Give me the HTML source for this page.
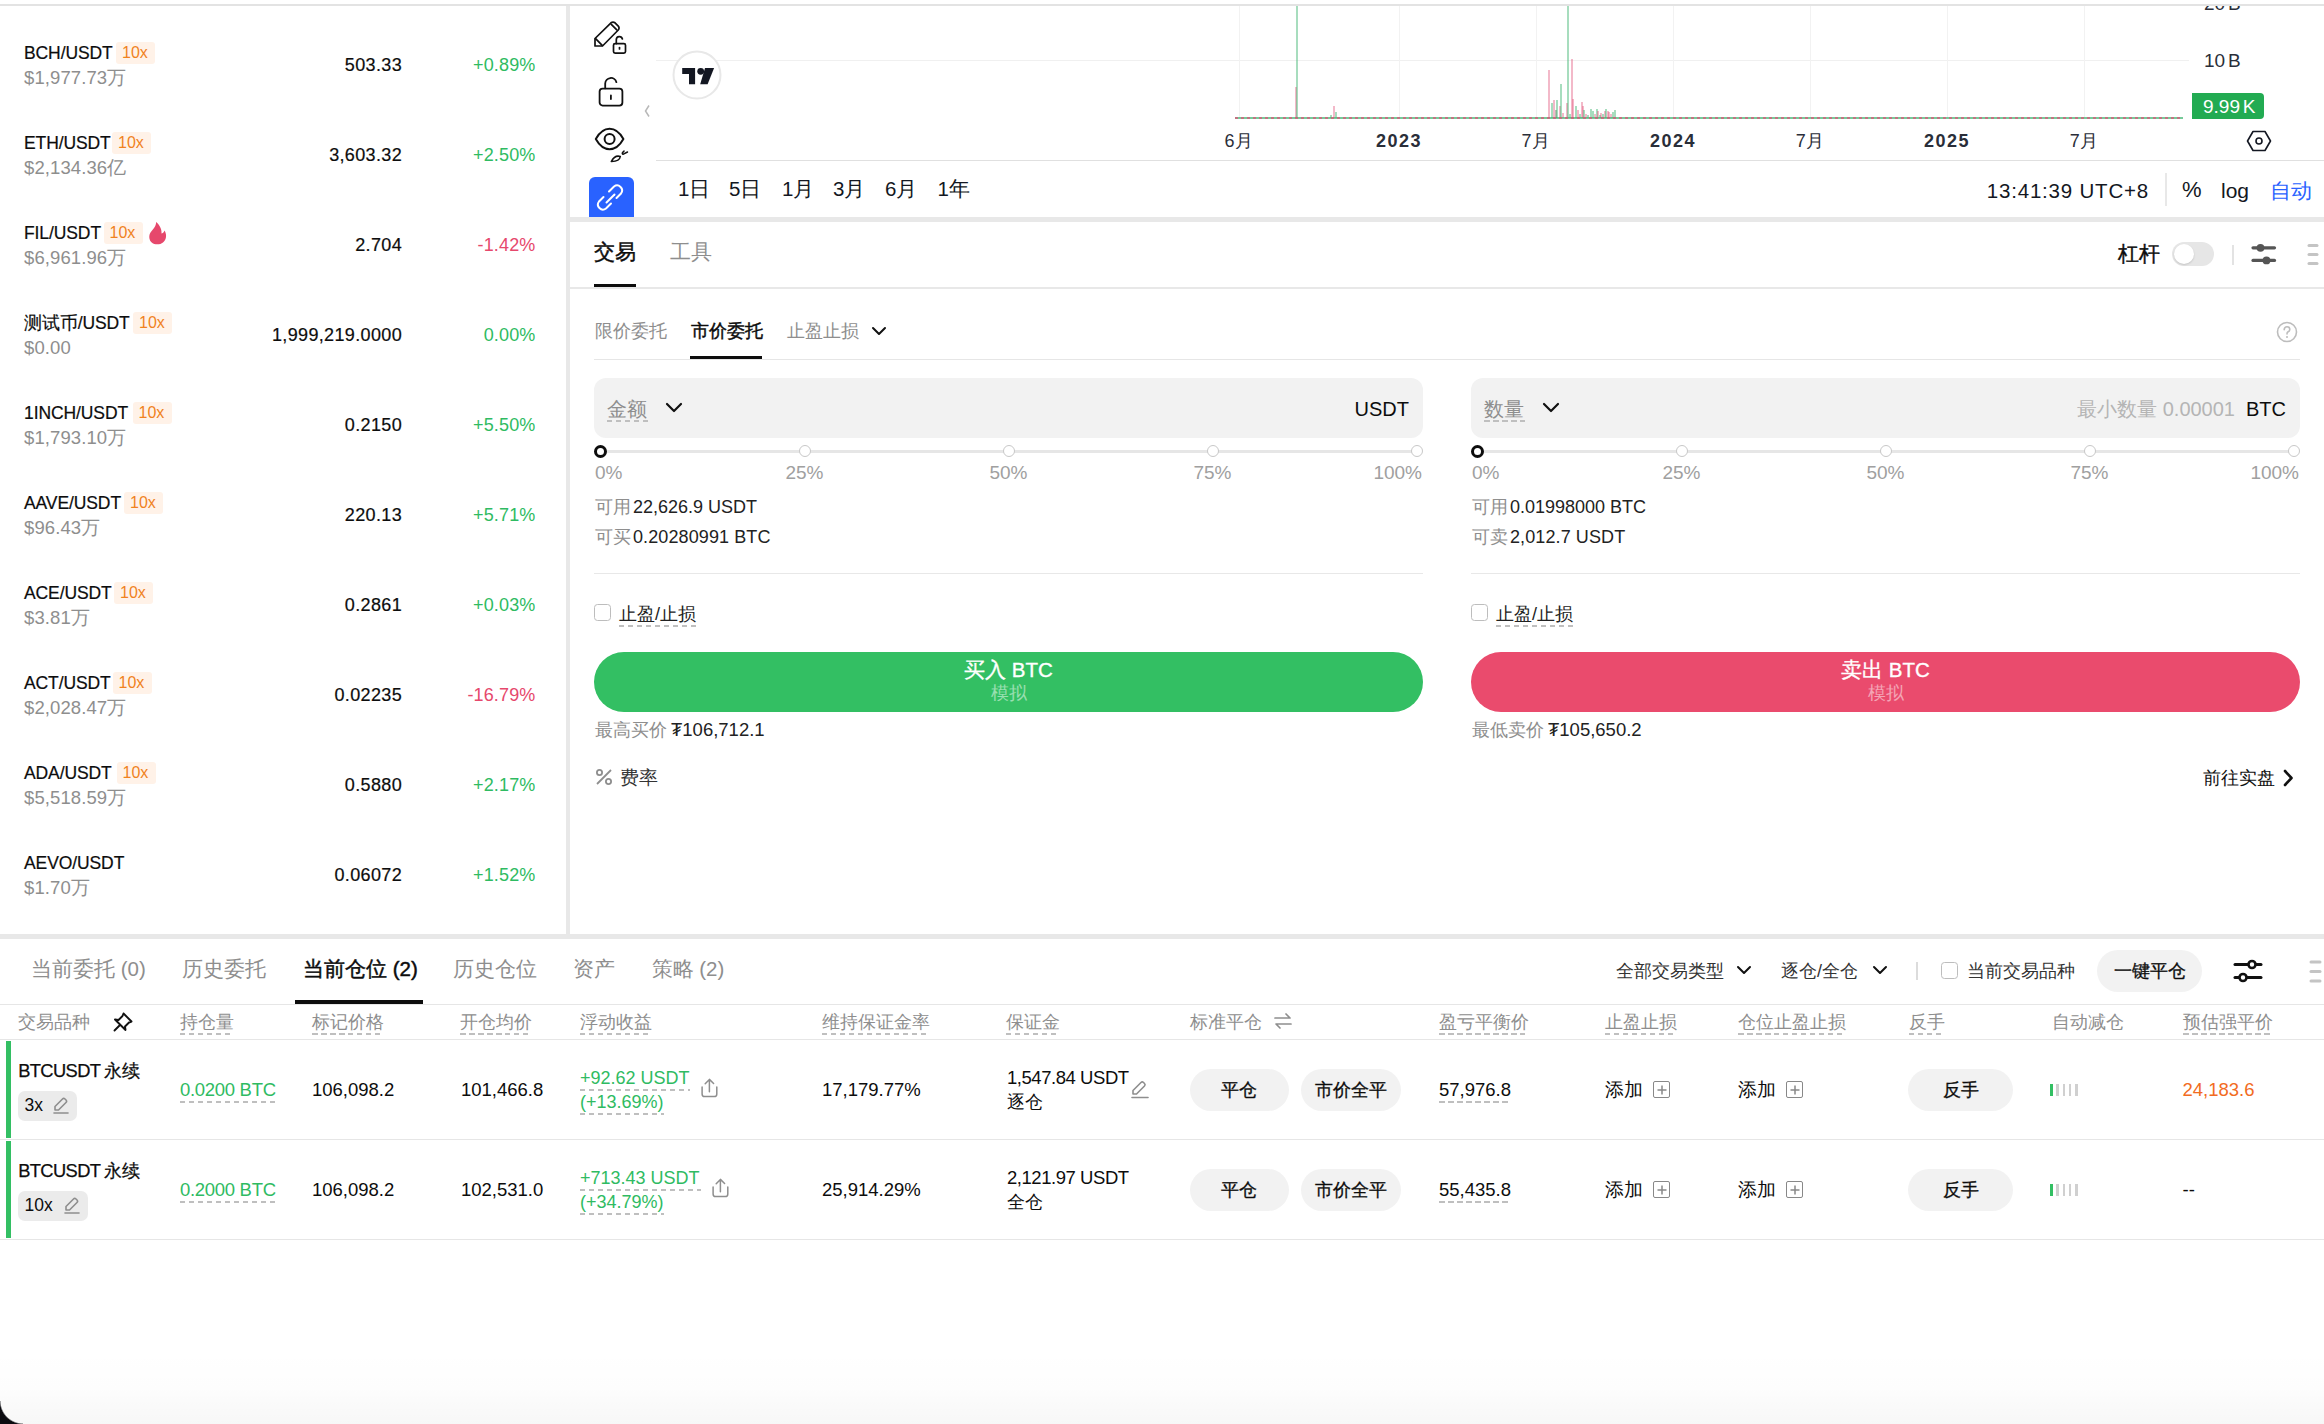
<!DOCTYPE html><html><head><meta charset="utf-8"><style>
html,body{margin:0;padding:0;}
body{width:2324px;height:1424px;position:relative;overflow:hidden;background:#fff;font-family:"Liberation Sans",sans-serif;}
.t{position:absolute;white-space:nowrap;}
.r{position:absolute;}
</style></head><body>
<div class="r" style="left:0px;top:4px;width:2324px;height:2px;background:#e3e3e3;border-radius:0px;"></div>
<div class="r" style="left:566px;top:6px;width:4px;height:928px;background:#e8e8e8;border-radius:0px;"></div>
<div class="r" style="left:570px;top:217px;width:1754px;height:5px;background:#e8e8e8;border-radius:0px;"></div>
<div class="r" style="left:0px;top:934px;width:2324px;height:5px;background:#e8e8e8;border-radius:0px;"></div>
<div class="t" style="top:45.2px;font-size:17.5px;line-height:17.5px;color:#0d0d0d;letter-spacing:-0.1px;left:24px;-webkit-text-stroke:0.2px #0d0d0d;">BCH/USDT</div>
<div class="r" style="left:116px;top:42px;width:39px;height:22px;background:#fff2e8;border-radius:3px;"></div>
<div class="t" style="top:44.5px;font-size:16px;line-height:16px;color:#f0821e;left:122px;">10x</div>
<div class="t" style="top:69.3px;font-size:18.5px;line-height:18.5px;color:#8e8e8e;letter-spacing:0.1px;left:24px;">$1,977.73万</div>
<div class="t" style="top:55.8px;font-size:18px;line-height:18px;color:#0d0d0d;letter-spacing:0.35px;right:1922px;-webkit-text-stroke:0.2px #0d0d0d;">503.33</div>
<div class="t" style="top:55.8px;font-size:18px;line-height:18px;color:#2fbb62;letter-spacing:0.15px;right:1788.5px;">+0.89%</div>
<div class="t" style="top:135.2px;font-size:17.5px;line-height:17.5px;color:#0d0d0d;letter-spacing:-0.1px;left:24px;-webkit-text-stroke:0.2px #0d0d0d;">ETH/USDT</div>
<div class="r" style="left:112px;top:132px;width:39px;height:22px;background:#fff2e8;border-radius:3px;"></div>
<div class="t" style="top:134.5px;font-size:16px;line-height:16px;color:#f0821e;left:118px;">10x</div>
<div class="t" style="top:159.3px;font-size:18.5px;line-height:18.5px;color:#8e8e8e;letter-spacing:0.1px;left:24px;">$2,134.36亿</div>
<div class="t" style="top:145.8px;font-size:18px;line-height:18px;color:#0d0d0d;letter-spacing:0.35px;right:1922px;-webkit-text-stroke:0.2px #0d0d0d;">3,603.32</div>
<div class="t" style="top:145.8px;font-size:18px;line-height:18px;color:#2fbb62;letter-spacing:0.15px;right:1788.5px;">+2.50%</div>
<div class="t" style="top:225.2px;font-size:17.5px;line-height:17.5px;color:#0d0d0d;letter-spacing:-0.1px;left:24px;-webkit-text-stroke:0.2px #0d0d0d;">FIL/USDT</div>
<div class="r" style="left:103.5px;top:222px;width:39px;height:22px;background:#fff2e8;border-radius:3px;"></div>
<div class="t" style="top:224.5px;font-size:16px;line-height:16px;color:#f0821e;left:109.5px;">10x</div>
<svg class="r" style="left:147.5px;top:221px;" width="20" height="24" viewBox="0 0 20 24" fill="none"><path d="M8,1 C8.5,5 5,8 2.5,11.5 C0.5,14.5 1,19.5 4,21.8 C6.5,23.8 12,24 15,21.5 C18.5,18.5 19,13.5 16.5,9.5 C16,11.5 14.5,12.5 13.5,12.5 C14,8.5 11.5,3.5 8,1 Z" fill="#e6486c"/></svg>
<div class="t" style="top:249.3px;font-size:18.5px;line-height:18.5px;color:#8e8e8e;letter-spacing:0.1px;left:24px;">$6,961.96万</div>
<div class="t" style="top:235.8px;font-size:18px;line-height:18px;color:#0d0d0d;letter-spacing:0.35px;right:1922px;-webkit-text-stroke:0.2px #0d0d0d;">2.704</div>
<div class="t" style="top:235.8px;font-size:18px;line-height:18px;color:#e6486c;letter-spacing:0.15px;right:1788.5px;">-1.42%</div>
<div class="t" style="top:315.2px;font-size:17.5px;line-height:17.5px;color:#0d0d0d;letter-spacing:-0.1px;left:24px;-webkit-text-stroke:0.2px #0d0d0d;">测试币/USDT</div>
<div class="r" style="left:133px;top:312px;width:39px;height:22px;background:#fff2e8;border-radius:3px;"></div>
<div class="t" style="top:314.5px;font-size:16px;line-height:16px;color:#f0821e;left:139px;">10x</div>
<div class="t" style="top:339.3px;font-size:18.5px;line-height:18.5px;color:#8e8e8e;letter-spacing:0.1px;left:24px;">$0.00</div>
<div class="t" style="top:325.8px;font-size:18px;line-height:18px;color:#0d0d0d;letter-spacing:0.35px;right:1922px;-webkit-text-stroke:0.2px #0d0d0d;">1,999,219.0000</div>
<div class="t" style="top:325.8px;font-size:18px;line-height:18px;color:#2fbb62;letter-spacing:0.15px;right:1788.5px;">0.00%</div>
<div class="t" style="top:405.2px;font-size:17.5px;line-height:17.5px;color:#0d0d0d;letter-spacing:-0.1px;left:24px;-webkit-text-stroke:0.2px #0d0d0d;">1INCH/USDT</div>
<div class="r" style="left:132.5px;top:402px;width:39px;height:22px;background:#fff2e8;border-radius:3px;"></div>
<div class="t" style="top:404.5px;font-size:16px;line-height:16px;color:#f0821e;left:138.5px;">10x</div>
<div class="t" style="top:429.3px;font-size:18.5px;line-height:18.5px;color:#8e8e8e;letter-spacing:0.1px;left:24px;">$1,793.10万</div>
<div class="t" style="top:415.8px;font-size:18px;line-height:18px;color:#0d0d0d;letter-spacing:0.35px;right:1922px;-webkit-text-stroke:0.2px #0d0d0d;">0.2150</div>
<div class="t" style="top:415.8px;font-size:18px;line-height:18px;color:#2fbb62;letter-spacing:0.15px;right:1788.5px;">+5.50%</div>
<div class="t" style="top:495.2px;font-size:17.5px;line-height:17.5px;color:#0d0d0d;letter-spacing:-0.1px;left:24px;-webkit-text-stroke:0.2px #0d0d0d;">AAVE/USDT</div>
<div class="r" style="left:124px;top:492px;width:39px;height:22px;background:#fff2e8;border-radius:3px;"></div>
<div class="t" style="top:494.5px;font-size:16px;line-height:16px;color:#f0821e;left:130px;">10x</div>
<div class="t" style="top:519.3px;font-size:18.5px;line-height:18.5px;color:#8e8e8e;letter-spacing:0.1px;left:24px;">$96.43万</div>
<div class="t" style="top:505.8px;font-size:18px;line-height:18px;color:#0d0d0d;letter-spacing:0.35px;right:1922px;-webkit-text-stroke:0.2px #0d0d0d;">220.13</div>
<div class="t" style="top:505.8px;font-size:18px;line-height:18px;color:#2fbb62;letter-spacing:0.15px;right:1788.5px;">+5.71%</div>
<div class="t" style="top:585.2px;font-size:17.5px;line-height:17.5px;color:#0d0d0d;letter-spacing:-0.1px;left:24px;-webkit-text-stroke:0.2px #0d0d0d;">ACE/USDT</div>
<div class="r" style="left:114px;top:582px;width:39px;height:22px;background:#fff2e8;border-radius:3px;"></div>
<div class="t" style="top:584.5px;font-size:16px;line-height:16px;color:#f0821e;left:120px;">10x</div>
<div class="t" style="top:609.3px;font-size:18.5px;line-height:18.5px;color:#8e8e8e;letter-spacing:0.1px;left:24px;">$3.81万</div>
<div class="t" style="top:595.8px;font-size:18px;line-height:18px;color:#0d0d0d;letter-spacing:0.35px;right:1922px;-webkit-text-stroke:0.2px #0d0d0d;">0.2861</div>
<div class="t" style="top:595.8px;font-size:18px;line-height:18px;color:#2fbb62;letter-spacing:0.15px;right:1788.5px;">+0.03%</div>
<div class="t" style="top:675.2px;font-size:17.5px;line-height:17.5px;color:#0d0d0d;letter-spacing:-0.1px;left:24px;-webkit-text-stroke:0.2px #0d0d0d;">ACT/USDT</div>
<div class="r" style="left:112.5px;top:672px;width:39px;height:22px;background:#fff2e8;border-radius:3px;"></div>
<div class="t" style="top:674.5px;font-size:16px;line-height:16px;color:#f0821e;left:118.5px;">10x</div>
<div class="t" style="top:699.3px;font-size:18.5px;line-height:18.5px;color:#8e8e8e;letter-spacing:0.1px;left:24px;">$2,028.47万</div>
<div class="t" style="top:685.8px;font-size:18px;line-height:18px;color:#0d0d0d;letter-spacing:0.35px;right:1922px;-webkit-text-stroke:0.2px #0d0d0d;">0.02235</div>
<div class="t" style="top:685.8px;font-size:18px;line-height:18px;color:#e6486c;letter-spacing:0.15px;right:1788.5px;">-16.79%</div>
<div class="t" style="top:765.2px;font-size:17.5px;line-height:17.5px;color:#0d0d0d;letter-spacing:-0.1px;left:24px;-webkit-text-stroke:0.2px #0d0d0d;">ADA/USDT</div>
<div class="r" style="left:116.5px;top:762px;width:39px;height:22px;background:#fff2e8;border-radius:3px;"></div>
<div class="t" style="top:764.5px;font-size:16px;line-height:16px;color:#f0821e;left:122.5px;">10x</div>
<div class="t" style="top:789.3px;font-size:18.5px;line-height:18.5px;color:#8e8e8e;letter-spacing:0.1px;left:24px;">$5,518.59万</div>
<div class="t" style="top:775.8px;font-size:18px;line-height:18px;color:#0d0d0d;letter-spacing:0.35px;right:1922px;-webkit-text-stroke:0.2px #0d0d0d;">0.5880</div>
<div class="t" style="top:775.8px;font-size:18px;line-height:18px;color:#2fbb62;letter-spacing:0.15px;right:1788.5px;">+2.17%</div>
<div class="t" style="top:855.2px;font-size:17.5px;line-height:17.5px;color:#0d0d0d;letter-spacing:-0.1px;left:24px;-webkit-text-stroke:0.2px #0d0d0d;">AEVO/USDT</div>
<div class="t" style="top:879.3px;font-size:18.5px;line-height:18.5px;color:#8e8e8e;letter-spacing:0.1px;left:24px;">$1.70万</div>
<div class="t" style="top:865.8px;font-size:18px;line-height:18px;color:#0d0d0d;letter-spacing:0.35px;right:1922px;-webkit-text-stroke:0.2px #0d0d0d;">0.06072</div>
<div class="t" style="top:865.8px;font-size:18px;line-height:18px;color:#2fbb62;letter-spacing:0.15px;right:1788.5px;">+1.52%</div>
<div class="r" style="left:656px;top:60px;width:1533px;height:1px;background:#f0f0f0;border-radius:0px;"></div>
<div class="r" style="left:1239px;top:6px;width:1px;height:112px;background:#f2f2f2;border-radius:0px;"></div>
<div class="r" style="left:1399px;top:6px;width:1px;height:112px;background:#f2f2f2;border-radius:0px;"></div>
<div class="r" style="left:1536px;top:6px;width:1px;height:112px;background:#f2f2f2;border-radius:0px;"></div>
<div class="r" style="left:1673px;top:6px;width:1px;height:112px;background:#f2f2f2;border-radius:0px;"></div>
<div class="r" style="left:1810px;top:6px;width:1px;height:112px;background:#f2f2f2;border-radius:0px;"></div>
<div class="r" style="left:1947px;top:6px;width:1px;height:112px;background:#f2f2f2;border-radius:0px;"></div>
<div class="r" style="left:2084px;top:6px;width:1px;height:112px;background:#f2f2f2;border-radius:0px;"></div>
<div class="r" style="left:656px;top:160px;width:1668px;height:1px;background:#e0e0e0;border-radius:0px;"></div>
<svg class="r" style="left:594px;top:21px;" width="34" height="34" viewBox="0 0 34 34" fill="none"><g stroke="#111" stroke-width="1.7" stroke-linejoin="round" stroke-linecap="round"><path d="M1,25 L1,17.5 L17,1.8 Q19,0.3 21,1.8 L24.3,5.1 Q25.8,7 24.3,9 L8.5,25 Z"/><path d="M17.3,3.3 L22.8,8.8"/><path d="M1.6,17.6 L8.2,24.4"/><rect x="19.5" y="22.6" width="12" height="9.6" rx="1.6" fill="#fff"/><path d="M22.3,22.6 V18.6 A3.1,3.1 0 0 1 28.4,18"/><path d="M25.5,26.5 V28"/></g></svg>
<svg class="r" style="left:597px;top:75px;" width="28" height="34" viewBox="0 0 28 34" fill="none"><g stroke="#111" stroke-width="1.8" stroke-linecap="round"><rect x="2.6" y="13.6" width="22.8" height="17" rx="3"/><path d="M8.2,13.3 V8.5 A5.7,5.7 0 0 1 19.4,7.2"/><path d="M13.9,20.5 V24"/></g></svg>
<svg class="r" style="left:594px;top:126px;" width="36" height="38" viewBox="0 0 36 38" fill="none"><g stroke="#111" stroke-width="2" stroke-linejoin="round" stroke-linecap="round"><path d="M1.8,13 C6,5.5 11,2.8 15.6,2.8 C20.2,2.8 25.2,5.5 29.4,13 C25.2,20.5 20.2,23.2 15.6,23.2 C11,23.2 6,20.5 1.8,13 Z"/><circle cx="15.6" cy="13" r="5"/><path d="M17.3,35.5 Q20.8,28.8 26.3,30.5 Q25.5,35.6 17.3,35.5 Z" stroke-width="1.6"/><path d="M30,25.1 Q27.2,27.5 28.9,28.3 L33.5,26" stroke-width="1.5"/></g></svg>
<div class="r" style="left:589px;top:177px;width:45px;height:40px;background:#2962ff;border-radius:6px 6px 0 0;"></div>
<svg class="r" style="left:589px;top:177px;" width="45" height="40" viewBox="0 0 45 40" fill="none"><g stroke="#fff" stroke-width="2" stroke-linecap="round" fill="none"><path d="M20,14.5 L25,9.5 A5,5 0 0 1 32,16.5 L27.5,21"/><path d="M14.5,20 L10,24.5 A5,5 0 0 0 17,31.5 L22,26.5"/><path d="M17.5,25.5 L25.5,17.5"/></g></svg>
<svg class="r" style="left:642px;top:104px;" width="10" height="14" viewBox="0 0 10 14" fill="none"><path d="M7,1.5 L3.5,7 L7,12.5" stroke="#b8b8b8" stroke-width="1.5" fill="none"/></svg>
<svg class="r" style="left:672px;top:50px;" width="50" height="50" viewBox="0 0 50 50" fill="none"><circle cx="25" cy="25" r="23.5" fill="#fff" stroke="#e8e8e8" stroke-width="2"/><path d="M10.2,18 H23.1 V34.3 H17 V24 H10.2 Z" fill="#131722"/><circle cx="28.7" cy="21.3" r="3.4" fill="#131722"/><path d="M33,18 H42.1 L35.6,34.3 H28.2 Z" fill="#131722"/></svg>
<svg class="r" style="left:1235px;top:0px;" width="950" height="120" viewBox="0 0 950 120" fill="none"><rect x="60" y="87" width="2" height="31" fill="rgba(225,80,120,0.4)"/><rect x="61" y="6" width="2" height="112" fill="rgba(60,180,110,0.45)"/><rect x="95" y="115" width="2" height="3" fill="rgba(60,180,110,0.45)"/><rect x="98" y="106" width="2" height="12" fill="rgba(225,80,120,0.4)"/><rect x="100" y="112" width="2" height="6" fill="rgba(60,180,110,0.45)"/><rect x="313" y="70" width="2" height="48" fill="rgba(225,80,120,0.4)"/><rect x="316" y="103" width="2" height="15" fill="rgba(60,180,110,0.45)"/><rect x="318" y="100" width="2" height="18" fill="rgba(225,80,120,0.4)"/><rect x="320" y="110" width="2" height="8" fill="rgba(120,120,100,0.5)"/><rect x="321" y="100" width="2" height="18" fill="rgba(60,180,110,0.45)"/><rect x="324" y="106" width="2" height="12" fill="rgba(225,80,120,0.4)"/><rect x="325" y="84" width="2" height="34" fill="rgba(60,180,110,0.45)"/><rect x="327" y="113" width="2" height="5" fill="rgba(225,80,120,0.4)"/><rect x="331" y="103" width="2" height="15" fill="rgba(225,80,120,0.4)"/><rect x="332" y="6" width="2" height="112" fill="rgba(60,180,110,0.45)"/><rect x="334" y="114" width="2" height="4" fill="rgba(60,180,110,0.45)"/><rect x="336" y="59" width="2" height="59" fill="rgba(225,80,120,0.4)"/><rect x="337" y="99" width="2" height="19" fill="rgba(225,80,120,0.4)"/><rect x="340" y="106" width="2" height="12" fill="rgba(60,180,110,0.45)"/><rect x="342" y="110" width="2" height="8" fill="rgba(225,80,120,0.4)"/><rect x="344" y="114" width="2" height="4" fill="rgba(60,180,110,0.45)"/><rect x="346" y="102" width="2" height="16" fill="rgba(225,80,120,0.4)"/><rect x="347" y="106" width="2" height="12" fill="rgba(225,80,120,0.4)"/><rect x="348" y="110" width="2" height="8" fill="rgba(60,180,110,0.45)"/><rect x="350" y="114" width="2" height="4" fill="rgba(225,80,120,0.4)"/><rect x="352" y="115" width="2" height="3" fill="rgba(60,180,110,0.45)"/><rect x="355" y="109" width="2" height="9" fill="rgba(60,180,110,0.45)"/><rect x="357" y="111" width="2" height="7" fill="rgba(60,180,110,0.45)"/><rect x="359" y="114" width="2" height="4" fill="rgba(225,80,120,0.4)"/><rect x="361" y="109" width="2" height="9" fill="rgba(60,180,110,0.45)"/><rect x="362" y="111" width="2" height="7" fill="rgba(225,80,120,0.4)"/><rect x="364" y="115" width="2" height="3" fill="rgba(60,180,110,0.45)"/><rect x="365" y="113" width="2" height="5" fill="rgba(225,80,120,0.4)"/><rect x="367" y="114" width="2" height="4" fill="rgba(60,180,110,0.45)"/><rect x="369" y="111" width="2" height="7" fill="rgba(225,80,120,0.4)"/><rect x="370" y="109" width="2" height="9" fill="rgba(60,180,110,0.45)"/><rect x="372" y="111" width="2" height="7" fill="rgba(225,80,120,0.4)"/><rect x="373" y="112" width="2" height="6" fill="rgba(225,80,120,0.4)"/><rect x="375" y="114" width="2" height="4" fill="rgba(225,80,120,0.4)"/><rect x="377" y="112" width="2" height="6" fill="rgba(60,180,110,0.45)"/><rect x="379" y="110" width="2" height="8" fill="rgba(60,180,110,0.45)"/><line x1="0" y1="118" x2="948" y2="118" stroke="rgba(60,180,110,0.7)" stroke-width="2"/><line x1="0" y1="118" x2="948" y2="118" stroke="rgba(225,80,120,0.7)" stroke-width="2" stroke-dasharray="3 3"/></svg>
<div class="t" style="top:132.3px;font-size:18px;line-height:18px;color:#2a2e39;left:1224.5px;">6月</div>
<div class="t" style="top:132.3px;font-size:18px;line-height:18px;color:#2a2e39;font-weight:700;letter-spacing:1.5px;left:1376px;">2023</div>
<div class="t" style="top:132.3px;font-size:18px;line-height:18px;color:#2a2e39;left:1521.5px;">7月</div>
<div class="t" style="top:132.3px;font-size:18px;line-height:18px;color:#2a2e39;font-weight:700;letter-spacing:1.5px;left:1650px;">2024</div>
<div class="t" style="top:132.3px;font-size:18px;line-height:18px;color:#2a2e39;left:1795.7px;">7月</div>
<div class="t" style="top:132.3px;font-size:18px;line-height:18px;color:#2a2e39;font-weight:700;letter-spacing:1.5px;left:1924px;">2025</div>
<div class="t" style="top:132.3px;font-size:18px;line-height:18px;color:#2a2e39;left:2069.8px;">7月</div>
<div class="r" style="left:2190px;top:6px;width:80px;height:20px;overflow:hidden"><div class="t" style="left:14px;top:-12.1px;font-size:19px;line-height:19px;color:#2a2e39;word-spacing:-2.5px">20 B</div></div>
<div class="t" style="top:50.9px;font-size:19px;line-height:19px;color:#2a2e39;left:2204px;word-spacing:-2.5px;">10 B</div>
<div class="r" style="left:2191.5px;top:93px;width:72px;height:26px;background:#22ab52;border-radius:0px;border-radius:0 4px 4px 0;"></div>
<div class="t" style="top:96.9px;font-size:19px;line-height:19px;color:#fff;left:2203px;word-spacing:-2.5px;">9.99 K</div>
<svg class="r" style="left:2246px;top:130px;" width="26" height="22" viewBox="0 0 26 22" fill="none"><path d="M7,1.5 H19 L24.5,11 L19,20.5 H7 L1.5,11 Z" stroke="#131722" stroke-width="1.6" stroke-linejoin="round"/><circle cx="13" cy="11" r="3" stroke="#131722" stroke-width="1.6"/></svg>
<div class="t" style="top:179.4px;font-size:20.5px;line-height:20.5px;color:#131722;left:678px;">1日</div>
<div class="t" style="top:179.4px;font-size:20.5px;line-height:20.5px;color:#131722;left:729px;">5日</div>
<div class="t" style="top:179.4px;font-size:20.5px;line-height:20.5px;color:#131722;left:782px;">1月</div>
<div class="t" style="top:179.4px;font-size:20.5px;line-height:20.5px;color:#131722;left:833px;">3月</div>
<div class="t" style="top:179.4px;font-size:20.5px;line-height:20.5px;color:#131722;left:885px;">6月</div>
<div class="t" style="top:179.4px;font-size:20.5px;line-height:20.5px;color:#131722;left:937.5px;">1年</div>
<div class="t" style="top:180.6px;font-size:20.5px;line-height:20.5px;color:#131722;letter-spacing:0.8px;right:175px;">13:41:39 UTC+8</div>
<div class="r" style="left:2165px;top:173px;width:2px;height:33px;background:#e8e8e8;border-radius:0px;"></div>
<div class="t" style="top:179.4px;font-size:22px;line-height:22px;color:#131722;left:2182px;">%</div>
<div class="t" style="top:180.2px;font-size:21px;line-height:21px;color:#131722;left:2221px;">log</div>
<div class="t" style="top:180.6px;font-size:20.5px;line-height:20.5px;color:#2962ff;left:2270px;">自动</div>
<div class="t" style="top:240.7px;font-size:21px;line-height:21px;color:#0d0d0d;left:594px;-webkit-text-stroke:0.45px #0d0d0d;">交易</div>
<div class="r" style="left:594px;top:284px;width:42px;height:4px;background:#0d0d0d;border-radius:0px;"></div>
<div class="t" style="top:240.7px;font-size:21px;line-height:21px;color:#8e8e8e;left:670px;">工具</div>
<div class="r" style="left:570px;top:287px;width:1754px;height:1.5px;background:#e8e8e8;border-radius:0px;"></div>
<div class="t" style="top:243.2px;font-size:21px;line-height:21px;color:#0d0d0d;left:2118px;-webkit-text-stroke:0.4px #0d0d0d;">杠杆</div>
<div class="r" style="left:2172px;top:242px;width:42px;height:24px;background:#e6e6e6;border-radius:12px;"></div>
<div class="r" style="left:2174px;top:244px;width:20px;height:20px;border-radius:50%;background:#fff;box-shadow:0 1px 2px rgba(0,0,0,0.15)"></div>
<div class="r" style="left:2232px;top:245px;width:2px;height:20px;background:#e3e3e3;border-radius:0px;"></div>
<svg class="r" style="left:2250px;top:242px;" width="28" height="24" viewBox="0 0 28 24" fill="none"><g stroke="#555" stroke-width="3.2" stroke-linecap="round"><path d="M3,5.8 H24.5"/><path d="M3,18.4 H24.5"/></g><circle cx="10.5" cy="5.8" r="3.9" fill="#555"/><circle cx="16.5" cy="18.4" r="3.9" fill="#555"/></svg>
<svg class="r" style="left:2306px;top:243px;" width="14" height="24" viewBox="0 0 14 24" fill="none"><g stroke="#c4c4c4" stroke-width="3" stroke-linecap="round"><path d="M3,2.5 H11"/><path d="M3,11.5 H11"/><path d="M3,20.5 H11"/></g></svg>
<div class="t" style="top:322.1px;font-size:18px;line-height:18px;color:#8e8e8e;left:594.5px;">限价委托</div>
<div class="t" style="top:322.1px;font-size:18px;line-height:18px;color:#0d0d0d;left:690.5px;-webkit-text-stroke:0.45px #0d0d0d;">市价委托</div>
<div class="r" style="left:690px;top:356px;width:72px;height:3px;background:#0d0d0d;border-radius:0px;"></div>
<div class="t" style="top:322.1px;font-size:18px;line-height:18px;color:#8e8e8e;left:786.5px;">止盈止损</div>
<svg class="r" style="left:870px;top:322px;" width="18" height="18" viewBox="0 0 18 18" fill="none"><path d="M3,6 L9,12 L15,6" stroke="#111" stroke-width="2" fill="none" stroke-linecap="round" stroke-linejoin="round"/></svg>
<div class="r" style="left:594px;top:359px;width:1706px;height:1px;background:#e6e6e6;border-radius:0px;"></div>
<svg class="r" style="left:2276px;top:321px;" width="22" height="22" viewBox="0 0 22 22" fill="none"><circle cx="11" cy="11" r="9.5" stroke="#bdbdbd" stroke-width="1.6"/><path d="M8.2,8.6 Q8.4,5.8 11,5.8 Q13.8,5.8 13.8,8.4 Q13.8,10 11.8,11 Q11,11.5 11,13" stroke="#bdbdbd" stroke-width="1.6" fill="none" stroke-linecap="round"/><circle cx="11" cy="16" r="1" fill="#bdbdbd"/></svg>
<div class="r" style="left:594px;top:378px;width:829px;height:60px;background:#f2f2f2;border-radius:12px;"></div>
<div class="t" style="top:399.1px;font-size:20px;line-height:20px;color:#8e8e8e;left:607px;">金额</div>
<div class="r" style="left:607px;top:420px;width:42px;height:2px;background:repeating-linear-gradient(90deg,#bfbfbf 0 5.5px,transparent 5.5px 9px);"></div>
<svg class="r" style="left:664px;top:398px;" width="20" height="20" viewBox="0 0 20 20" fill="none"><path d="M3,6 L10,13 L17,6" stroke="#111" stroke-width="2.2" fill="none" stroke-linecap="round" stroke-linejoin="round"/></svg>
<div class="t" style="top:399.1px;font-size:20px;line-height:20px;color:#0d0d0d;right:915px;">USDT</div>
<div class="r" style="left:600px;top:450px;width:817px;height:3px;background:#e6e6e6;border-radius:0px;"></div>
<div class="r" style="left:594.0px;top:444.5px;width:7px;height:7px;border:3px solid #0d0d0d;border-radius:50%;background:#fff"></div>
<div class="r" style="left:798.5px;top:445px;width:10px;height:10px;border:1.2px solid #c8c8c8;border-radius:50%;background:#fff"></div>
<div class="r" style="left:1002.5px;top:445px;width:10px;height:10px;border:1.2px solid #c8c8c8;border-radius:50%;background:#fff"></div>
<div class="r" style="left:1206.5px;top:445px;width:10px;height:10px;border:1.2px solid #c8c8c8;border-radius:50%;background:#fff"></div>
<div class="r" style="left:1410.5px;top:445px;width:10px;height:10px;border:1.2px solid #c8c8c8;border-radius:50%;background:#fff"></div>
<div class="t" style="top:463.4px;font-size:19px;line-height:19px;color:#a0a0a0;left:595px;">0%</div>
<div class="t" style="top:463.4px;font-size:19px;line-height:19px;color:#a0a0a0;left:504.5px;width:600px;text-align:center;">25%</div>
<div class="t" style="top:463.4px;font-size:19px;line-height:19px;color:#a0a0a0;left:708.5px;width:600px;text-align:center;">50%</div>
<div class="t" style="top:463.4px;font-size:19px;line-height:19px;color:#a0a0a0;left:912.5px;width:600px;text-align:center;">75%</div>
<div class="t" style="top:463.4px;font-size:19px;line-height:19px;color:#a0a0a0;right:902px;">100%</div>
<div class="t" style="top:498.7px;font-size:17.5px;line-height:17.5px;color:#8e8e8e;left:595px;">可用</div>
<div class="t" style="top:498.3px;font-size:18px;line-height:18px;color:#222;letter-spacing:0px;left:633px;">22,626.9 USDT</div>
<div class="t" style="top:528.7px;font-size:17.5px;line-height:17.5px;color:#8e8e8e;left:595px;">可买</div>
<div class="t" style="top:528.3px;font-size:18px;line-height:18px;color:#222;letter-spacing:0.1px;left:633px;">0.20280991 BTC</div>
<div class="r" style="left:594px;top:573px;width:829px;height:1px;background:#e8e8e8;border-radius:0px;"></div>
<div class="r" style="left:594px;top:604px;width:14.6px;height:14.6px;border:1.6px solid #bdbdbd;border-radius:3.5px;background:#fff"></div>
<div class="t" style="top:605.3px;font-size:18px;line-height:18px;color:#222;left:619px;">止盈/止损</div>
<div class="r" style="left:619px;top:625px;width:78px;height:2px;background:repeating-linear-gradient(90deg,#bfbfbf 0 5.5px,transparent 5.5px 9px);"></div>
<div class="r" style="left:594px;top:652px;width:829px;height:60px;background:#33bf63;border-radius:30px;"></div>
<div class="t" style="top:660.1px;font-size:20.5px;line-height:20.5px;color:#fff;left:708.5px;width:600px;text-align:center;-webkit-text-stroke:0.35px #fff;">买入 BTC</div>
<div class="t" style="top:685.2px;font-size:17.5px;line-height:17.5px;color:rgba(255,255,255,0.5);left:708.5px;width:600px;text-align:center;">模拟</div>
<div class="t" style="top:722.2px;font-size:17.5px;line-height:17.5px;color:#8e8e8e;left:595px;">最高买价</div>
<div class="t" style="top:721.3px;font-size:18.5px;line-height:18.5px;color:#222;letter-spacing:0px;left:671px;">₮106,712.1</div>
<div class="r" style="left:1471px;top:378px;width:829px;height:60px;background:#f2f2f2;border-radius:12px;"></div>
<div class="t" style="top:399.1px;font-size:20px;line-height:20px;color:#8e8e8e;left:1484px;">数量</div>
<div class="r" style="left:1484px;top:420px;width:42px;height:2px;background:repeating-linear-gradient(90deg,#bfbfbf 0 5.5px,transparent 5.5px 9px);"></div>
<svg class="r" style="left:1541px;top:398px;" width="20" height="20" viewBox="0 0 20 20" fill="none"><path d="M3,6 L10,13 L17,6" stroke="#111" stroke-width="2.2" fill="none" stroke-linecap="round" stroke-linejoin="round"/></svg>
<div class="t" style="top:399.1px;font-size:20px;line-height:20px;color:#b5b5b5;right:89px;">最小数量 0.00001</div>
<div class="t" style="top:399.1px;font-size:20px;line-height:20px;color:#0d0d0d;right:38px;">BTC</div>
<div class="r" style="left:1477px;top:450px;width:817px;height:3px;background:#e6e6e6;border-radius:0px;"></div>
<div class="r" style="left:1471.0px;top:444.5px;width:7px;height:7px;border:3px solid #0d0d0d;border-radius:50%;background:#fff"></div>
<div class="r" style="left:1675.5px;top:445px;width:10px;height:10px;border:1.2px solid #c8c8c8;border-radius:50%;background:#fff"></div>
<div class="r" style="left:1879.5px;top:445px;width:10px;height:10px;border:1.2px solid #c8c8c8;border-radius:50%;background:#fff"></div>
<div class="r" style="left:2083.5px;top:445px;width:10px;height:10px;border:1.2px solid #c8c8c8;border-radius:50%;background:#fff"></div>
<div class="r" style="left:2287.5px;top:445px;width:10px;height:10px;border:1.2px solid #c8c8c8;border-radius:50%;background:#fff"></div>
<div class="t" style="top:463.4px;font-size:19px;line-height:19px;color:#a0a0a0;left:1472px;">0%</div>
<div class="t" style="top:463.4px;font-size:19px;line-height:19px;color:#a0a0a0;left:1381.5px;width:600px;text-align:center;">25%</div>
<div class="t" style="top:463.4px;font-size:19px;line-height:19px;color:#a0a0a0;left:1585.5px;width:600px;text-align:center;">50%</div>
<div class="t" style="top:463.4px;font-size:19px;line-height:19px;color:#a0a0a0;left:1789.5px;width:600px;text-align:center;">75%</div>
<div class="t" style="top:463.4px;font-size:19px;line-height:19px;color:#a0a0a0;right:25px;">100%</div>
<div class="t" style="top:498.7px;font-size:17.5px;line-height:17.5px;color:#8e8e8e;left:1472px;">可用</div>
<div class="t" style="top:498.3px;font-size:18px;line-height:18px;color:#222;letter-spacing:0px;left:1510px;">0.01998000 BTC</div>
<div class="t" style="top:528.7px;font-size:17.5px;line-height:17.5px;color:#8e8e8e;left:1472px;">可卖</div>
<div class="t" style="top:528.3px;font-size:18px;line-height:18px;color:#222;letter-spacing:0.1px;left:1510px;">2,012.7 USDT</div>
<div class="r" style="left:1471px;top:573px;width:829px;height:1px;background:#e8e8e8;border-radius:0px;"></div>
<div class="r" style="left:1471px;top:604px;width:14.6px;height:14.6px;border:1.6px solid #bdbdbd;border-radius:3.5px;background:#fff"></div>
<div class="t" style="top:605.3px;font-size:18px;line-height:18px;color:#222;left:1496px;">止盈/止损</div>
<div class="r" style="left:1496px;top:625px;width:78px;height:2px;background:repeating-linear-gradient(90deg,#bfbfbf 0 5.5px,transparent 5.5px 9px);"></div>
<div class="r" style="left:1471px;top:652px;width:829px;height:60px;background:#ea4b6d;border-radius:30px;"></div>
<div class="t" style="top:660.1px;font-size:20.5px;line-height:20.5px;color:#fff;left:1585.5px;width:600px;text-align:center;-webkit-text-stroke:0.35px #fff;">卖出 BTC</div>
<div class="t" style="top:685.2px;font-size:17.5px;line-height:17.5px;color:rgba(255,255,255,0.5);left:1585.5px;width:600px;text-align:center;">模拟</div>
<div class="t" style="top:722.2px;font-size:17.5px;line-height:17.5px;color:#8e8e8e;left:1472px;">最低卖价</div>
<div class="t" style="top:721.3px;font-size:18.5px;line-height:18.5px;color:#222;letter-spacing:0px;left:1548px;">₮105,650.2</div>
<svg class="r" style="left:594px;top:767px;" width="20" height="20" viewBox="0 0 20 20" fill="none"><g stroke="#8e8e8e" stroke-width="1.8" fill="none"><path d="M3,17 L17,3"/><circle cx="5.5" cy="5.5" r="2.6"/><circle cx="14.5" cy="14.5" r="2.6"/></g></svg>
<div class="t" style="top:768.8px;font-size:18.5px;line-height:18.5px;color:#333;left:620px;">费率</div>
<div class="t" style="top:769.9px;font-size:17.8px;line-height:17.8px;color:#111;right:49px;">前往实盘</div>
<svg class="r" style="left:2280px;top:768px;" width="16" height="20" viewBox="0 0 16 20" fill="none"><path d="M5,3 L11.5,10 L5,17" stroke="#111" stroke-width="2.6" fill="none" stroke-linecap="round" stroke-linejoin="round"/></svg>
<div class="t" style="top:959.4px;font-size:20.5px;line-height:20.5px;color:#8e8e8e;left:31px;">当前委托 (0)</div>
<div class="t" style="top:959.4px;font-size:20.5px;line-height:20.5px;color:#8e8e8e;left:181.8px;">历史委托</div>
<div class="t" style="top:959.4px;font-size:20.5px;line-height:20.5px;color:#0d0d0d;left:303px;-webkit-text-stroke:0.45px #0d0d0d;">当前仓位 (2)</div>
<div class="t" style="top:959.4px;font-size:20.5px;line-height:20.5px;color:#8e8e8e;left:452.7px;">历史仓位</div>
<div class="t" style="top:959.4px;font-size:20.5px;line-height:20.5px;color:#8e8e8e;left:573px;">资产</div>
<div class="t" style="top:959.4px;font-size:20.5px;line-height:20.5px;color:#8e8e8e;left:651.6px;">策略 (2)</div>
<div class="r" style="left:295px;top:1000px;width:128px;height:4px;background:#0d0d0d;border-radius:0px;"></div>
<div class="r" style="left:0px;top:1004px;width:2324px;height:1px;background:#e6e6e6;border-radius:0px;"></div>
<div class="t" style="top:961.8px;font-size:18px;line-height:18px;color:#333;left:1616px;">全部交易类型</div>
<svg class="r" style="left:1735px;top:961px;" width="18" height="18" viewBox="0 0 18 18" fill="none"><path d="M3,6 L9,12 L15,6" stroke="#111" stroke-width="2" fill="none" stroke-linecap="round" stroke-linejoin="round"/></svg>
<div class="t" style="top:961.8px;font-size:18px;line-height:18px;color:#333;left:1781px;">逐仓/全仓</div>
<svg class="r" style="left:1871px;top:961px;" width="18" height="18" viewBox="0 0 18 18" fill="none"><path d="M3,6 L9,12 L15,6" stroke="#111" stroke-width="2" fill="none" stroke-linecap="round" stroke-linejoin="round"/></svg>
<div class="r" style="left:1916px;top:962px;width:1.5px;height:18px;background:#dcdcdc;border-radius:0px;"></div>
<div class="r" style="left:1941px;top:962px;width:14.8px;height:14.8px;border:1.6px solid #bdbdbd;border-radius:3.5px;background:#fff"></div>
<div class="t" style="top:961.8px;font-size:18px;line-height:18px;color:#333;left:1966.5px;">当前交易品种</div>
<div class="r" style="left:2097px;top:950px;width:105px;height:42px;background:#f2f2f2;border-radius:21px;"></div>
<div class="t" style="top:962.1px;font-size:18px;line-height:18px;color:#0d0d0d;left:1849.5px;width:600px;text-align:center;-webkit-text-stroke:0.3px #0d0d0d;">一键平仓</div>
<svg class="r" style="left:2232px;top:957px;" width="32" height="28" viewBox="0 0 32 28" fill="none"><g stroke="#111" stroke-width="3" stroke-linecap="round"><path d="M3,7.5 H29"/><path d="M3,20.5 H29"/></g><circle cx="20" cy="7.5" r="3.5" fill="#fff" stroke="#111" stroke-width="2.6"/><circle cx="11" cy="20.5" r="3.5" fill="#fff" stroke="#111" stroke-width="2.6"/></svg>
<svg class="r" style="left:2308px;top:959px;" width="16" height="26" viewBox="0 0 16 26" fill="none"><g stroke="#c4c4c4" stroke-width="3" stroke-linecap="round"><path d="M3,3 H12"/><path d="M3,12.5 H12"/><path d="M3,22 H12"/></g></svg>
<div class="t" style="top:1013.3px;font-size:18px;line-height:18px;color:#8e8e8e;left:18.2px;">交易品种</div>
<div class="t" style="top:1013.3px;font-size:18px;line-height:18px;color:#8e8e8e;left:180px;">持仓量</div>
<div class="r" style="left:180px;top:1033px;width:54px;height:2px;background:repeating-linear-gradient(90deg,#bfbfbf 0 5.5px,transparent 5.5px 9px);"></div>
<div class="t" style="top:1013.3px;font-size:18px;line-height:18px;color:#8e8e8e;left:311.5px;">标记价格</div>
<div class="r" style="left:311.5px;top:1033px;width:72.0px;height:2px;background:repeating-linear-gradient(90deg,#bfbfbf 0 5.5px,transparent 5.5px 9px);"></div>
<div class="t" style="top:1013.3px;font-size:18px;line-height:18px;color:#8e8e8e;left:460px;">开仓均价</div>
<div class="r" style="left:460px;top:1033px;width:72px;height:2px;background:repeating-linear-gradient(90deg,#bfbfbf 0 5.5px,transparent 5.5px 9px);"></div>
<div class="t" style="top:1013.3px;font-size:18px;line-height:18px;color:#8e8e8e;left:580px;">浮动收益</div>
<div class="r" style="left:580px;top:1033px;width:72px;height:2px;background:repeating-linear-gradient(90deg,#bfbfbf 0 5.5px,transparent 5.5px 9px);"></div>
<div class="t" style="top:1013.3px;font-size:18px;line-height:18px;color:#8e8e8e;left:822px;">维持保证金率</div>
<div class="r" style="left:822px;top:1033px;width:108px;height:2px;background:repeating-linear-gradient(90deg,#bfbfbf 0 5.5px,transparent 5.5px 9px);"></div>
<div class="t" style="top:1013.3px;font-size:18px;line-height:18px;color:#8e8e8e;left:1005.5px;">保证金</div>
<div class="r" style="left:1005.5px;top:1033px;width:54.0px;height:2px;background:repeating-linear-gradient(90deg,#bfbfbf 0 5.5px,transparent 5.5px 9px);"></div>
<div class="t" style="top:1013.3px;font-size:18px;line-height:18px;color:#8e8e8e;left:1189.6px;">标准平仓</div>
<div class="t" style="top:1013.3px;font-size:18px;line-height:18px;color:#8e8e8e;left:1439.2px;">盈亏平衡价</div>
<div class="r" style="left:1439.2px;top:1033px;width:90.0px;height:2px;background:repeating-linear-gradient(90deg,#bfbfbf 0 5.5px,transparent 5.5px 9px);"></div>
<div class="t" style="top:1013.3px;font-size:18px;line-height:18px;color:#8e8e8e;left:1605.4px;">止盈止损</div>
<div class="r" style="left:1605.4px;top:1033px;width:72.0px;height:2px;background:repeating-linear-gradient(90deg,#bfbfbf 0 5.5px,transparent 5.5px 9px);"></div>
<div class="t" style="top:1013.3px;font-size:18px;line-height:18px;color:#8e8e8e;left:1738px;">仓位止盈止损</div>
<div class="r" style="left:1738px;top:1033px;width:108px;height:2px;background:repeating-linear-gradient(90deg,#bfbfbf 0 5.5px,transparent 5.5px 9px);"></div>
<div class="t" style="top:1013.3px;font-size:18px;line-height:18px;color:#8e8e8e;left:1908.5px;">反手</div>
<div class="r" style="left:1908.5px;top:1033px;width:36.0px;height:2px;background:repeating-linear-gradient(90deg,#bfbfbf 0 5.5px,transparent 5.5px 9px);"></div>
<div class="t" style="top:1013.3px;font-size:18px;line-height:18px;color:#8e8e8e;left:2051.5px;">自动减仓</div>
<div class="t" style="top:1013.3px;font-size:18px;line-height:18px;color:#8e8e8e;left:2183px;">预估强平价</div>
<div class="r" style="left:2183px;top:1033px;width:90px;height:2px;background:repeating-linear-gradient(90deg,#bfbfbf 0 5.5px,transparent 5.5px 9px);"></div>
<svg class="r" style="left:112px;top:1011px;" width="22" height="22" viewBox="0 0 22 22" fill="none"><g stroke="#111" stroke-width="1.9" stroke-linejoin="round" stroke-linecap="round" fill="none"><path d="M11.5,2.5 L19.5,10.5 L17,11.5 L13,15.5 L13.5,19 L3,8.5 L6.5,9 L10.5,5 Z"/><path d="M7.5,14.5 L2.5,19.5"/></g></svg>
<svg class="r" style="left:1272px;top:1011px;" width="22" height="20" viewBox="0 0 22 20" fill="none"><g stroke="#8e8e8e" stroke-width="1.7" stroke-linecap="round" stroke-linejoin="round" fill="none"><path d="M3,7 H18 L14,3"/><path d="M19,13 H4 L8,17"/></g></svg>
<div class="r" style="left:0px;top:1039px;width:2324px;height:1px;background:#e6e6e6;border-radius:0px;"></div>
<div class="r" style="left:6px;top:1041px;width:5px;height:97px;background:#33bf63;border-radius:0px;"></div>
<div class="t" style="top:1062.0px;font-size:18.3px;line-height:18.3px;color:#0d0d0d;letter-spacing:-0.6px;left:18.2px;-webkit-text-stroke:0.25px #0d0d0d;">BTCUSDT 永续</div>
<div class="r" style="left:18px;top:1091px;width:58.5px;height:30px;background:#ebebeb;border-radius:7px;"></div>
<div class="t" style="top:1096.7px;font-size:17.5px;line-height:17.5px;color:#0d0d0d;left:24.5px;">3x</div>
<svg class="r" style="left:52.5px;top:1097px;" width="16" height="17" viewBox="0 0 16 17" fill="none"><g stroke="#8e8e8e" stroke-width="1.6" stroke-linecap="round" stroke-linejoin="round" fill="none"><path d="M2,12 L2,9.5 L9.5,2 Q10.7,0.8 12,2 L13,3 Q14.2,4.3 13,5.5 L5.5,13 H2 Z"/><path d="M1,16 H15"/></g></svg>
<div class="t" style="top:1080.8px;font-size:18.5px;line-height:18.5px;color:#2fbb62;letter-spacing:-0.3px;left:180px;">0.0200 BTC</div>
<div class="r" style="left:180px;top:1101px;width:95px;height:2px;background:repeating-linear-gradient(90deg,#bfbfbf 0 5.5px,transparent 5.5px 9px);"></div>
<div class="t" style="top:1080.8px;font-size:18.5px;line-height:18.5px;color:#0d0d0d;left:312px;">106,098.2</div>
<div class="t" style="top:1080.8px;font-size:18.5px;line-height:18.5px;color:#0d0d0d;left:461px;">101,466.8</div>
<div class="t" style="top:1069.3px;font-size:18px;line-height:18px;color:#2fbb62;left:580px;">+92.62 USDT</div>
<div class="r" style="left:580px;top:1089px;width:110px;height:2px;background:repeating-linear-gradient(90deg,#bfbfbf 0 5.5px,transparent 5.5px 9px);"></div>
<div class="t" style="top:1093.3px;font-size:18px;line-height:18px;color:#2fbb62;left:580px;">(+13.69%)</div>
<div class="r" style="left:580px;top:1113px;width:84px;height:2px;background:repeating-linear-gradient(90deg,#bfbfbf 0 5.5px,transparent 5.5px 9px);"></div>
<svg class="r" style="left:700px;top:1077px;" width="20" height="22" viewBox="0 0 20 22" fill="none"><g stroke="#8e8e8e" stroke-width="1.5" stroke-linecap="round" stroke-linejoin="round" fill="none"><path d="M9.4,2.4 V14.8 M5.2,6.7 L9.4,2.4 L13.6,6.5"/><path d="M2.1,10 V17 Q2.1,19.6 4.6,19.6 H14.3 Q16.8,19.6 16.8,17 V10"/></g></svg>
<div class="t" style="top:1080.8px;font-size:18.5px;line-height:18.5px;color:#0d0d0d;left:822px;">17,179.77%</div>
<div class="t" style="top:1068.8px;font-size:18.5px;line-height:18.5px;color:#0d0d0d;letter-spacing:-0.45px;left:1007px;">1,547.84 USDT</div>
<div class="t" style="top:1093.3px;font-size:18px;line-height:18px;color:#0d0d0d;left:1007px;">逐仓</div>
<svg class="r" style="left:1130px;top:1080px;" width="20" height="20" viewBox="0 0 20 20" fill="none"><g stroke="#8e8e8e" stroke-width="1.6" stroke-linecap="round" stroke-linejoin="round" fill="none"><path d="M3,13 L3,10.5 L11,2.5 Q12.2,1.3 13.5,2.5 L14.5,3.5 Q15.7,4.8 14.5,6 L6.5,14 H3 Z"/><path d="M2,17.5 H18"/></g></svg>
<div class="r" style="left:1189.6px;top:1069px;width:99px;height:42px;background:#f2f2f2;border-radius:21px;"></div>
<div class="t" style="top:1081.3px;font-size:18px;line-height:18px;color:#0d0d0d;left:939px;width:600px;text-align:center;-webkit-text-stroke:0.3px #0d0d0d;">平仓</div>
<div class="r" style="left:1301px;top:1069px;width:100px;height:42px;background:#f2f2f2;border-radius:21px;"></div>
<div class="t" style="top:1081.3px;font-size:18px;line-height:18px;color:#0d0d0d;left:1051px;width:600px;text-align:center;-webkit-text-stroke:0.3px #0d0d0d;">市价全平</div>
<div class="t" style="top:1080.8px;font-size:18.5px;line-height:18.5px;color:#0d0d0d;left:1439px;">57,976.8</div>
<div class="r" style="left:1439px;top:1101px;width:72px;height:2px;background:repeating-linear-gradient(90deg,#bfbfbf 0 5.5px,transparent 5.5px 9px);"></div>
<div class="t" style="top:1081.3px;font-size:18.5px;line-height:18.5px;color:#0d0d0d;left:1605.4px;">添加</div>
<div class="r" style="left:1653.4px;top:1081px;width:15px;height:15px;border:1.5px solid #888;border-radius:2px"></div>
<svg class="r" style="left:1653.4px;top:1081px;" width="18" height="18" viewBox="0 0 18 18" fill="none"><path d="M9,4.5 V13.5 M4.5,9 H13.5" stroke="#888" stroke-width="1.5"/></svg>
<div class="t" style="top:1081.3px;font-size:18.5px;line-height:18.5px;color:#0d0d0d;left:1738px;">添加</div>
<div class="r" style="left:1786px;top:1081px;width:15px;height:15px;border:1.5px solid #888;border-radius:2px"></div>
<svg class="r" style="left:1786px;top:1081px;" width="18" height="18" viewBox="0 0 18 18" fill="none"><path d="M9,4.5 V13.5 M4.5,9 H13.5" stroke="#888" stroke-width="1.5"/></svg>
<div class="r" style="left:1908px;top:1069px;width:105px;height:42px;background:#f2f2f2;border-radius:21px;"></div>
<div class="t" style="top:1081.3px;font-size:18px;line-height:18px;color:#0d0d0d;left:1660.5px;width:600px;text-align:center;-webkit-text-stroke:0.3px #0d0d0d;">反手</div>
<div class="r" style="left:2050px;top:1084px;width:3px;height:12px;background:#33bf63;border-radius:0px;"></div>
<div class="r" style="left:2056.3px;top:1084px;width:2.5px;height:12px;background:#d0d0d0;border-radius:0px;"></div>
<div class="r" style="left:2062.6px;top:1084px;width:2.5px;height:12px;background:#d0d0d0;border-radius:0px;"></div>
<div class="r" style="left:2068.9px;top:1084px;width:2.5px;height:12px;background:#d0d0d0;border-radius:0px;"></div>
<div class="r" style="left:2075.2px;top:1084px;width:2.5px;height:12px;background:#d0d0d0;border-radius:0px;"></div>
<div class="t" style="top:1080.8px;font-size:18.5px;line-height:18.5px;color:#f26b22;left:2182.5px;">24,183.6</div>
<div class="r" style="left:0px;top:1139px;width:2324px;height:1px;background:#e6e6e6;border-radius:0px;"></div>
<div class="r" style="left:6px;top:1141px;width:5px;height:97px;background:#33bf63;border-radius:0px;"></div>
<div class="t" style="top:1162.0px;font-size:18.3px;line-height:18.3px;color:#0d0d0d;letter-spacing:-0.6px;left:18.2px;-webkit-text-stroke:0.25px #0d0d0d;">BTCUSDT 永续</div>
<div class="r" style="left:18px;top:1191px;width:70px;height:30px;background:#ebebeb;border-radius:7px;"></div>
<div class="t" style="top:1196.7px;font-size:17.5px;line-height:17.5px;color:#0d0d0d;left:24.5px;">10x</div>
<svg class="r" style="left:64px;top:1197px;" width="16" height="17" viewBox="0 0 16 17" fill="none"><g stroke="#8e8e8e" stroke-width="1.6" stroke-linecap="round" stroke-linejoin="round" fill="none"><path d="M2,12 L2,9.5 L9.5,2 Q10.7,0.8 12,2 L13,3 Q14.2,4.3 13,5.5 L5.5,13 H2 Z"/><path d="M1,16 H15"/></g></svg>
<div class="t" style="top:1180.8px;font-size:18.5px;line-height:18.5px;color:#2fbb62;letter-spacing:-0.3px;left:180px;">0.2000 BTC</div>
<div class="r" style="left:180px;top:1201px;width:95px;height:2px;background:repeating-linear-gradient(90deg,#bfbfbf 0 5.5px,transparent 5.5px 9px);"></div>
<div class="t" style="top:1180.8px;font-size:18.5px;line-height:18.5px;color:#0d0d0d;left:312px;">106,098.2</div>
<div class="t" style="top:1180.8px;font-size:18.5px;line-height:18.5px;color:#0d0d0d;left:461px;">102,531.0</div>
<div class="t" style="top:1169.3px;font-size:18px;line-height:18px;color:#2fbb62;left:580px;">+713.43 USDT</div>
<div class="r" style="left:580px;top:1189px;width:121px;height:2px;background:repeating-linear-gradient(90deg,#bfbfbf 0 5.5px,transparent 5.5px 9px);"></div>
<div class="t" style="top:1193.3px;font-size:18px;line-height:18px;color:#2fbb62;left:580px;">(+34.79%)</div>
<div class="r" style="left:580px;top:1213px;width:84px;height:2px;background:repeating-linear-gradient(90deg,#bfbfbf 0 5.5px,transparent 5.5px 9px);"></div>
<svg class="r" style="left:711px;top:1177px;" width="20" height="22" viewBox="0 0 20 22" fill="none"><g stroke="#8e8e8e" stroke-width="1.5" stroke-linecap="round" stroke-linejoin="round" fill="none"><path d="M9.4,2.4 V14.8 M5.2,6.7 L9.4,2.4 L13.6,6.5"/><path d="M2.1,10 V17 Q2.1,19.6 4.6,19.6 H14.3 Q16.8,19.6 16.8,17 V10"/></g></svg>
<div class="t" style="top:1180.8px;font-size:18.5px;line-height:18.5px;color:#0d0d0d;left:822px;">25,914.29%</div>
<div class="t" style="top:1168.8px;font-size:18.5px;line-height:18.5px;color:#0d0d0d;letter-spacing:-0.45px;left:1007px;">2,121.97 USDT</div>
<div class="t" style="top:1193.3px;font-size:18px;line-height:18px;color:#0d0d0d;left:1007px;">全仓</div>
<div class="r" style="left:1189.6px;top:1169px;width:99px;height:42px;background:#f2f2f2;border-radius:21px;"></div>
<div class="t" style="top:1181.3px;font-size:18px;line-height:18px;color:#0d0d0d;left:939px;width:600px;text-align:center;-webkit-text-stroke:0.3px #0d0d0d;">平仓</div>
<div class="r" style="left:1301px;top:1169px;width:100px;height:42px;background:#f2f2f2;border-radius:21px;"></div>
<div class="t" style="top:1181.3px;font-size:18px;line-height:18px;color:#0d0d0d;left:1051px;width:600px;text-align:center;-webkit-text-stroke:0.3px #0d0d0d;">市价全平</div>
<div class="t" style="top:1180.8px;font-size:18.5px;line-height:18.5px;color:#0d0d0d;left:1439px;">55,435.8</div>
<div class="r" style="left:1439px;top:1201px;width:72px;height:2px;background:repeating-linear-gradient(90deg,#bfbfbf 0 5.5px,transparent 5.5px 9px);"></div>
<div class="t" style="top:1181.3px;font-size:18.5px;line-height:18.5px;color:#0d0d0d;left:1605.4px;">添加</div>
<div class="r" style="left:1653.4px;top:1181px;width:15px;height:15px;border:1.5px solid #888;border-radius:2px"></div>
<svg class="r" style="left:1653.4px;top:1181px;" width="18" height="18" viewBox="0 0 18 18" fill="none"><path d="M9,4.5 V13.5 M4.5,9 H13.5" stroke="#888" stroke-width="1.5"/></svg>
<div class="t" style="top:1181.3px;font-size:18.5px;line-height:18.5px;color:#0d0d0d;left:1738px;">添加</div>
<div class="r" style="left:1786px;top:1181px;width:15px;height:15px;border:1.5px solid #888;border-radius:2px"></div>
<svg class="r" style="left:1786px;top:1181px;" width="18" height="18" viewBox="0 0 18 18" fill="none"><path d="M9,4.5 V13.5 M4.5,9 H13.5" stroke="#888" stroke-width="1.5"/></svg>
<div class="r" style="left:1908px;top:1169px;width:105px;height:42px;background:#f2f2f2;border-radius:21px;"></div>
<div class="t" style="top:1181.3px;font-size:18px;line-height:18px;color:#0d0d0d;left:1660.5px;width:600px;text-align:center;-webkit-text-stroke:0.3px #0d0d0d;">反手</div>
<div class="r" style="left:2050px;top:1184px;width:3px;height:12px;background:#33bf63;border-radius:0px;"></div>
<div class="r" style="left:2056.3px;top:1184px;width:2.5px;height:12px;background:#d0d0d0;border-radius:0px;"></div>
<div class="r" style="left:2062.6px;top:1184px;width:2.5px;height:12px;background:#d0d0d0;border-radius:0px;"></div>
<div class="r" style="left:2068.9px;top:1184px;width:2.5px;height:12px;background:#d0d0d0;border-radius:0px;"></div>
<div class="r" style="left:2075.2px;top:1184px;width:2.5px;height:12px;background:#d0d0d0;border-radius:0px;"></div>
<div class="t" style="top:1180.8px;font-size:18.5px;line-height:18.5px;color:#0d0d0d;left:2182.5px;">--</div>
<div class="r" style="left:0px;top:1239px;width:2324px;height:1px;background:#e6e6e6;border-radius:0px;"></div>
<div class="r" style="left:0;top:1350px;width:2324px;height:74px;background:linear-gradient(180deg,rgba(0,0,0,0) 0%,rgba(0,0,0,0.008) 50%,rgba(0,0,0,0.03) 100%)"></div>
<div class="r" style="left:0;top:1401px;width:23px;height:23px;background:radial-gradient(circle at 23px 0px, transparent 22px, #0b0b10 23.5px)"></div>
</body></html>
